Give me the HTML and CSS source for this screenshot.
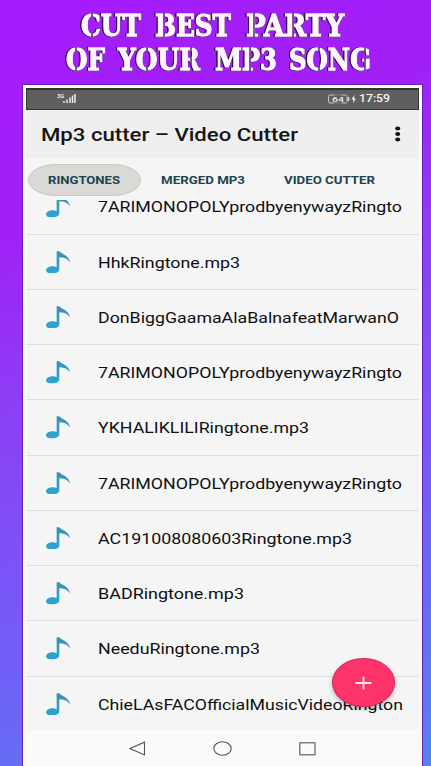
FILE: index.html
```html
<!DOCTYPE html>
<html lang="en">
<head>
<meta charset="utf-8">
<title>Mp3 cutter – Video Cutter</title>
<link rel="stylesheet" href="styles.css">
</head>
<body>
<svg class="defs" width="0" height="0" aria-hidden="true">
  <defs>
    <linearGradient id="noteFill" x1="0" y1="0" x2="0" y2="1"><stop offset="0" stop-color="#3d91ae"/><stop offset="1" stop-color="#2ba5d6"/></linearGradient>
    <symbol id="note" viewBox="138 76 73 68"><path fill="url(#noteFill)" d="M170 77h8c4 8 27 9 33 34-9-12-20-16-33-16v37c0 7-10 12-21 12-12 0-19-4-19-10 0-7 10-12 20-12 5 0 9 1 12 2z"/></symbol>
  </defs>
</svg>
<div class="page">
  <h1 class="headline">
    <svg class="headline-art" width="431" height="84" viewBox="0 0 431 84">
      <!-- Narrow vertical cuts give the lettering its stencil look -->
      <mask id="stencil" maskUnits="userSpaceOnUse" x="0" y="0" width="431" height="84">
        <rect width="431" height="84" fill="#fff"/>
        <path stroke="#000" stroke-width="1.300" d="M92 10v30M164 10v30M254 10v30M293 10v30M76 44v30M147 44v30M191 44v30M250 44v30M319 44v30M365 44v30"/>
      </mask>
      <g class="outlined"><g mask="url(#stencil)">
      <text x="81" y="36" textLength="60" lengthAdjust="spacingAndGlyphs">CUT</text>
      <text x="155" y="36" textLength="76" lengthAdjust="spacingAndGlyphs">BEST</text>
      <text x="246" y="36" textLength="98" lengthAdjust="spacingAndGlyphs">PARTY</text>
      <text x="66" y="70" textLength="39" lengthAdjust="spacingAndGlyphs">OF</text>
      <text x="118" y="70" textLength="82" lengthAdjust="spacingAndGlyphs">YOUR</text>
      <text x="215" y="70" textLength="62" lengthAdjust="spacingAndGlyphs">MP3</text>
      <text x="289" y="70" textLength="82" lengthAdjust="spacingAndGlyphs">SONG</text>
      </g></g>
    </svg>
  </h1>
  <main class="phone">
    <div class="status">
      <svg class="signal" width="20" height="14" viewBox="0 0 20 14">
        <text x="0" y="6" textLength="7" lengthAdjust="spacingAndGlyphs">3G</text>
        <path d="M7 11V9M10 11V7.500M13 11V5.500M15.500 11V3.500M18 11V2" stroke="#eee" stroke-width="1.500"/>
      </svg>
      <div class="status-right">
        <svg width="29" height="12" viewBox="0 0 29 12">
          <path d="M6 2H2Q.5 2 .5 3.500V8.500Q.5 10 2 10H6M14 2h3.500Q19 2 19 3.500V8.500Q19 10 17.500 10H14" fill="none" stroke="#c8c8c8"/>
          <path d="M6 2h8M6 10h8" stroke="#8c8c8c" stroke-width=".8"/>
          <path d="M20.500 4v4" stroke="#ddd" stroke-width="1.500"/>
          <text class="battery" x="4" y="9" textLength="12" lengthAdjust="spacingAndGlyphs">64</text>
          <path d="M26.500 1.500L23.500 6.500h2l-.5 4 3-5h-2z" fill="#eee"/>
        </svg>
        <svg width="31" height="12" viewBox="0 0 31 12"><text class="clock" x="0" y="9" textLength="31" lengthAdjust="spacingAndGlyphs">17:59</text></svg>
      </div>
    </div>
    <header class="appbar">
      <svg width="260" height="28" viewBox="0 0 260 28"><text class="title" x="0" y="21" textLength="257" lengthAdjust="spacingAndGlyphs">Mp3 cutter – Video Cutter</text></svg>
      <svg width="6" height="16" viewBox="0 0 6 16"><g fill="#111"><ellipse cx="2.700" cy="2.500" rx="2.500" ry="2"/><ellipse cx="2.700" cy="8" rx="2.500" ry="2"/><ellipse cx="2.700" cy="13.500" rx="2.500" ry="2"/></g></svg>
    </header>
    <nav class="tabs">
      <div class="tab tab-active"><svg width="73" height="14"><text x="0" y="11" textLength="72" lengthAdjust="spacingAndGlyphs">RINGTONES</text></svg></div>
      <div class="tab"><svg width="84" height="14"><text x="0" y="11" textLength="84" lengthAdjust="spacingAndGlyphs">MERGED MP3</text></svg></div>
      <div class="tab"><svg width="92" height="14"><text x="0" y="11" textLength="91" lengthAdjust="spacingAndGlyphs">VIDEO CUTTER</text></svg></div>
    </nav>
    <div class="viewport">
      <ul class="songs">
        <li class="row"><svg class="note"><use href="#note"/></svg><svg class="name"><text x="0" y="17" textLength="304" lengthAdjust="spacingAndGlyphs">7ARIMONOPOLYprodbyenywayzRingto</text></svg></li>
        <li class="row"><svg class="note"><use href="#note"/></svg><svg class="name"><text x="0" y="17" textLength="142" lengthAdjust="spacingAndGlyphs">HhkRingtone.mp3</text></svg></li>
        <li class="row"><svg class="note"><use href="#note"/></svg><svg class="name"><text x="0" y="17" textLength="301" lengthAdjust="spacingAndGlyphs">DonBiggGaamaAlaBalnafeatMarwanO</text></svg></li>
        <li class="row"><svg class="note"><use href="#note"/></svg><svg class="name"><text x="0" y="17" textLength="304" lengthAdjust="spacingAndGlyphs">7ARIMONOPOLYprodbyenywayzRingto</text></svg></li>
        <li class="row"><svg class="note"><use href="#note"/></svg><svg class="name"><text x="0" y="17" textLength="211" lengthAdjust="spacingAndGlyphs">YKHALIKLILIRingtone.mp3</text></svg></li>
        <li class="row"><svg class="note"><use href="#note"/></svg><svg class="name"><text x="0" y="17" textLength="304" lengthAdjust="spacingAndGlyphs">7ARIMONOPOLYprodbyenywayzRingto</text></svg></li>
        <li class="row"><svg class="note"><use href="#note"/></svg><svg class="name"><text x="0" y="17" textLength="254" lengthAdjust="spacingAndGlyphs">AC191008080603Ringtone.mp3</text></svg></li>
        <li class="row"><svg class="note"><use href="#note"/></svg><svg class="name"><text x="0" y="17" textLength="146" lengthAdjust="spacingAndGlyphs">BADRingtone.mp3</text></svg></li>
        <li class="row"><svg class="note"><use href="#note"/></svg><svg class="name"><text x="0" y="17" textLength="162" lengthAdjust="spacingAndGlyphs">NeeduRingtone.mp3</text></svg></li>
        <li class="row"><svg class="note"><use href="#note"/></svg><svg class="name"><text x="0" y="17" textLength="305" lengthAdjust="spacingAndGlyphs">ChieLAsFACOfficialMusicVideoRington</text></svg></li>
      </ul>
    </div>
    <div class="fab"><svg width="17" height="14" viewBox="0 0 17 14"><path d="M8.500 .5v13M.5 7h16" stroke="#ffe9ee" stroke-width="1.800"/></svg></div>
    <footer class="navbar">
      <svg width="17" height="16" viewBox="0 0 17 16"><path d="M1 8.500L15.500 2.200v12.800z" fill="none" stroke="#555" stroke-width="1.100"/></svg>
      <svg width="19" height="16" viewBox="0 0 19 16"><ellipse cx="9.500" cy="8.500" rx="8.700" ry="6.700" fill="none" stroke="#555" stroke-width="1.100"/></svg>
      <svg width="17" height="16" viewBox="0 0 17 16"><rect x=".8" y="2.800" width="15.200" height="12" fill="none" stroke="#555" stroke-width="1.100"/></svg>
    </footer>
  </main>
</div>
</body>
</html>
```
FILE: styles.css
```css
* { box-sizing: border-box; }
body { margin: 0; font-family: Roboto, "Liberation Sans", sans-serif; overflow: hidden; }
svg { display: block; flex: none; }
.defs { position: absolute; }
.page {
  width: 431px; height: 766px; overflow: hidden;
  display: flex; flex-direction: column;
  background: linear-gradient(158deg, #a51cff 0%, #a120f5 25%, #8a42f5 46%, #6f60f7 72%, #5583ef 100%);
}
.headline { margin: 0; height: 85px; flex: none; }
.headline-art text {
  font-family: "DejaVu Serif", serif; font-weight: 700; font-size: 29px;
  fill: #fff4ff; stroke: #fff4ff; stroke-width: 1.300px;
}
.outlined {
  filter: drop-shadow(.8px 0 0 #321446) drop-shadow(-.8px 0 0 #321446) drop-shadow(0 .7px 0 #321446);
}
.phone {
  position: relative;
  margin-left: 23px; width: 399px; height: 681px; flex: none;
  display: flex; flex-direction: column;
  background: #f5f5f5; border: solid #fdfbfd; border-width: 3px 3px 0;
  box-shadow: 0 0 0 1px #6a20b0;
}
.status {
  height: 22px; flex: none; background: #5f5f5f;
  border: 1px solid #333; border-top-width: 2px;
  display: flex; align-items: center; justify-content: space-between;
  padding: 0 28px 2px 30px;
}
.signal text { font-size: 6px; font-weight: 700; fill: #eee; }
.status-right { display: flex; align-items: center; gap: 2px; }
.battery { font-size: 8px; font-weight: 500; fill: #eee; }
.clock { font-size: 11px; font-weight: 500; fill: #f5f5f5; }
.appbar {
  height: 48px; flex: none; background: #efefef;
  display: flex; align-items: center; justify-content: space-between;
  padding: 0 18px 0 15px;
}
.title { font-size: 18px; font-weight: 500; fill: #151515; }
.tabs { height: 42px; flex: none; display: flex; align-items: center; padding: 6px 0 4px 2px; }
.tab { height: 32px; display: flex; align-items: center; padding: 0 20px; margin-right: -.5px; }
.tab text { font-size: 11.200px; font-weight: 700; fill: #1d4350; }
.tab-active { background: #dbd9d6; border: 1px solid #c9c8c5; border-radius: 28px / 16px; padding: 0 19px; }
.viewport {
  height: 530px; flex: none;
  display: flex; flex-direction: column; justify-content: flex-end;
}
.songs { margin: 0; padding: 0; list-style: none; flex: none; }
.row { height: 55.250px; display: flex; padding: 16px 0 0 20px; border-bottom: 1px solid #dedede; }
.row:first-child .note { clip-path: inset(4.800px 0 0 0); }
.row:last-child { border-bottom: 0; height: 53.500px; }
.note { width: 24.300px; height: 22.600px; }
.name { width: 310px; height: 24px; margin-left: 28px; }
.name text { font-size: 15.500px; fill: #101010; }
.fab {
  position: absolute; left: 306px; top: 570px; width: 63px; height: 49px;
  display: flex; align-items: center; justify-content: center;
  border: 1px solid #cf2f5c; border-radius: 50%; background: #ff3369;
  box-shadow: 0 2px 4px rgba(0, 0, 0, .28);
}
.navbar {
  height: 36px; flex: none; background: #fafafa;
  display: flex; align-items: center; justify-content: space-between;
  padding: 0 103px;
}
```
